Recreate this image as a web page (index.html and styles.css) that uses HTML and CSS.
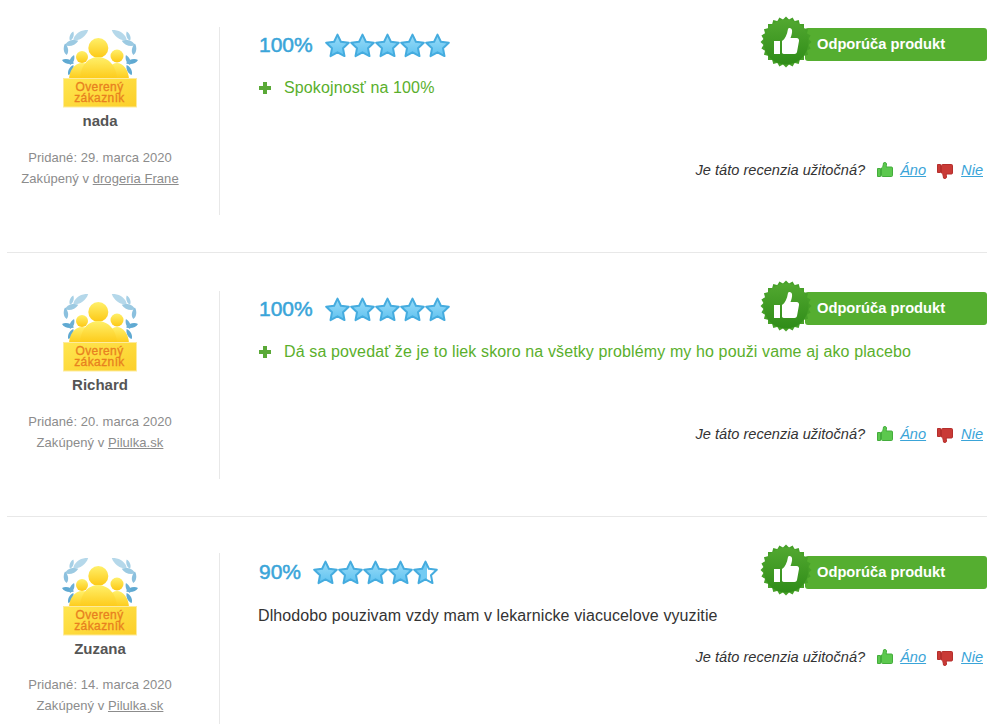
FILE: index.html
```html
<!DOCTYPE html>
<html lang="sk">
<head>
  <meta charset="UTF-8">
  <meta name="viewport" content="width=device-width, initial-scale=1.0">
  <title>Recenzie</title>
  <link rel="stylesheet" href="styles.css">
</head>
<body>
  <svg class="defs" width="0" height="0">
    <defs>
      <linearGradient id="star-fill" x1="0" y1="0" x2="0" y2="1">
        <stop offset="0" stop-color="#9adcf8"/>
        <stop offset="1" stop-color="#5fc2f0"/>
      </linearGradient>
      <linearGradient id="star-half" x1="0" y1="0" x2="1" y2="0">
        <stop offset="0.55" stop-color="#74cbf3"/>
        <stop offset="0.55" stop-color="#ffffff"/>
      </linearGradient>
      <linearGradient id="seal-fill" x1="0" y1="0" x2="0" y2="1">
        <stop offset="0" stop-color="#52a830"/>
        <stop offset="1" stop-color="#2f8c18"/>
      </linearGradient>
      <linearGradient id="gold" x1="0" y1="0" x2="0" y2="1">
        <stop offset="0" stop-color="#fff06a"/>
        <stop offset="1" stop-color="#fdc814"/>
      </linearGradient>
      <linearGradient id="plate" x1="0" y1="0" x2="1" y2="1">
        <stop offset="0" stop-color="#ffe650"/>
        <stop offset="1" stop-color="#fccf2a"/>
      </linearGradient>
      <path id="star-shape" d="M12.5 1.600L15.900 8.800L23.800 9.800L18 15.300L19.500 23.100L12.500 19.300L5.500 23.100L7 15.300L1.200 9.800L9.100 8.800Z"/>
      <path id="leaf" d="M0 0C3-3.200 9-3.200 13 0C9 3.200 3 3.200 0 0Z"/>
      <symbol id="star" viewBox="0 0 25 25">
        <use href="#star-shape" fill="url(#star-fill)" stroke="#45acdf" stroke-width="2" stroke-linejoin="round"/>
      </symbol>
      <symbol id="star-half-icon" viewBox="0 0 25 25">
        <use href="#star-shape" fill="url(#star-half)" stroke="#45acdf" stroke-width="2" stroke-linejoin="round"/>
      </symbol>
      <symbol id="seal" viewBox="0 0 52 52">
        <g fill="#46a028">
          <rect x="8" y="8" width="36" height="36"/>
          <rect x="8" y="8" width="36" height="36" transform="rotate(15 26 26)"/>
          <rect x="8" y="8" width="36" height="36" transform="rotate(30 26 26)"/>
          <rect x="8" y="8" width="36" height="36" transform="rotate(45 26 26)"/>
          <rect x="8" y="8" width="36" height="36" transform="rotate(60 26 26)"/>
          <rect x="8" y="8" width="36" height="36" transform="rotate(75 26 26)"/>
        </g>
        <circle cx="26" cy="26" r="22.500" fill="url(#seal-fill)"/>
        <path fill="#fff" d="M14 25h6v13h-6zM22 25c3-2 5-6 6-12 .3-1.700 3.600-1.500 4 1 .4 2.500-.5 5.500-1.500 8h6c2 0 2.800 1.500 2.500 3l-2 11c-.3 1.300-1.200 2-2.500 2H25c-1.500 0-3-.5-3-1.500z"/>
      </symbol>
      <symbol id="thumb" viewBox="0 0 16 16">
        <path d="M.5 6.500h3v8h-3zM4.500 6c1.200-.5 1.700-2 2-5 .1-.8 3-.8 3 .8 0 1.200-.1 2.200-.3 3.200h5.300c.6 0 1 .4 1 1v7.500c0 .6-.4 1-1 1H5.500c-.6 0-1-.4-1-1z"/>
      </symbol>
      <symbol id="verified" viewBox="0 0 76 78">
        <g id="laurel">
          <use href="#leaf" fill="#b5d8ea" transform="translate(11.300 10) rotate(-34) scale(1.380)"/>
          <use href="#leaf" fill="#a6d0e6" transform="translate(8 10.700) rotate(-70) scale(.75)"/>
          <use href="#leaf" fill="#9ccae2" transform="translate(3 15) rotate(-18) scale(1.080)"/>
          <use href="#leaf" fill="#8bc0de" transform="translate(4.700 25) rotate(-98) scale(.9)"/>
          <use href="#leaf" fill="#5fa9d2" transform="translate(0 30) rotate(15) scale(.96)"/>
          <use href="#leaf" fill="#6cb0d6" transform="translate(8 35) rotate(-68) scale(.83)"/>
          <use href="#leaf" fill="#5fa9d2" transform="translate(6.300 45) rotate(-63) scale(.86)"/>
        </g>
        <use href="#laurel" transform="translate(76 0) scale(-1 1)"/>
        <g fill="url(#gold)">
          <circle cx="20" cy="27" r="6"/>
          <circle cx="55" cy="26" r="6.500"/>
          <path d="M7 50c0-10 6-17 13-17s12 7 12 17z"/>
          <path d="M44 50c0-10 5-17 11-17s12 7 12 17z"/>
          <circle cx="36.300" cy="18" r="10"/>
          <path d="M18 50c0-14 8-23 18-23s19 9 19 23z"/>
        </g>
        <rect x="1.500" y="48.500" width="73" height="28.500" fill="url(#plate)" stroke="#fdeb9c"/>
        <text class="plate-text" x="37.500" y="60.500">Overený</text>
        <text class="plate-text" x="37.500" y="71.500">zákazník</text>
      </symbol>
    </defs>
  </svg>

  <div class="reviews">
    <article class="review">
      <div class="user">
        <svg class="user-badge" width="76" height="78"><use href="#verified"/></svg>
        <div class="user-name">nada</div>
        <p class="user-meta">Pridané: 29. marca 2020<br>Zakúpený v <a href="#">drogeria Frane</a></p>
      </div>
      <div class="main">
        <div class="head">
          <div class="score">
            <span class="percent">100%</span>
            <span class="stars">
              <svg width="25" height="25"><use href="#star"/></svg>
              <svg width="25" height="25"><use href="#star"/></svg>
              <svg width="25" height="25"><use href="#star"/></svg>
              <svg width="25" height="25"><use href="#star"/></svg>
              <svg width="25" height="25"><use href="#star"/></svg>
            </span>
          </div>
          <div class="recommend">
            <svg class="seal" width="52" height="52"><use href="#seal"/></svg>
            <div class="recommend-bar">Odporúča produkt</div>
          </div>
        </div>
        <div class="pro"><span class="plus"></span>Spokojnosť na 100%</div>
        <div class="vote">
          <span class="vote-label">Je táto recenzia užitočná?</span>
          <svg class="thumb-up" width="16" height="16"><use href="#thumb"/></svg>
          <a href="#">Áno</a>
          <svg class="thumb-down" width="16" height="16"><use href="#thumb"/></svg>
          <a href="#">Nie</a>
        </div>
      </div>
    </article>

    <article class="review">
      <div class="user">
        <svg class="user-badge" width="76" height="78"><use href="#verified"/></svg>
        <div class="user-name">Richard</div>
        <p class="user-meta">Pridané: 20. marca 2020<br>Zakúpený v <a href="#">Pilulka.sk</a></p>
      </div>
      <div class="main">
        <div class="head">
          <div class="score">
            <span class="percent">100%</span>
            <span class="stars">
              <svg width="25" height="25"><use href="#star"/></svg>
              <svg width="25" height="25"><use href="#star"/></svg>
              <svg width="25" height="25"><use href="#star"/></svg>
              <svg width="25" height="25"><use href="#star"/></svg>
              <svg width="25" height="25"><use href="#star"/></svg>
            </span>
          </div>
          <div class="recommend">
            <svg class="seal" width="52" height="52"><use href="#seal"/></svg>
            <div class="recommend-bar">Odporúča produkt</div>
          </div>
        </div>
        <div class="pro"><span class="plus"></span>Dá sa povedať že je to liek skoro na všetky problémy my ho použi vame aj ako placebo</div>
        <div class="vote">
          <span class="vote-label">Je táto recenzia užitočná?</span>
          <svg class="thumb-up" width="16" height="16"><use href="#thumb"/></svg>
          <a href="#">Áno</a>
          <svg class="thumb-down" width="16" height="16"><use href="#thumb"/></svg>
          <a href="#">Nie</a>
        </div>
      </div>
    </article>

    <article class="review">
      <div class="user">
        <svg class="user-badge" width="76" height="78"><use href="#verified"/></svg>
        <div class="user-name">Zuzana</div>
        <p class="user-meta">Pridané: 14. marca 2020<br>Zakúpený v <a href="#">Pilulka.sk</a></p>
      </div>
      <div class="main">
        <div class="head">
          <div class="score">
            <span class="percent">90%</span>
            <span class="stars">
              <svg width="25" height="25"><use href="#star"/></svg>
              <svg width="25" height="25"><use href="#star"/></svg>
              <svg width="25" height="25"><use href="#star"/></svg>
              <svg width="25" height="25"><use href="#star"/></svg>
              <svg width="25" height="25"><use href="#star-half-icon"/></svg>
            </span>
          </div>
          <div class="recommend">
            <svg class="seal" width="52" height="52"><use href="#seal"/></svg>
            <div class="recommend-bar">Odporúča produkt</div>
          </div>
        </div>
        <div class="comment">Dlhodobo pouzivam vzdy mam v lekarnicke viacucelove vyuzitie</div>
        <div class="vote">
          <span class="vote-label">Je táto recenzia užitočná?</span>
          <svg class="thumb-up" width="16" height="16"><use href="#thumb"/></svg>
          <a href="#">Áno</a>
          <svg class="thumb-down" width="16" height="16"><use href="#thumb"/></svg>
          <a href="#">Nie</a>
        </div>
      </div>
    </article>
  </div>
</body>
</html>
```
FILE: styles.css
```css
html, body {
  height: 100%;
  overflow: hidden;
}
body {
  margin: 0;
  background-color: white;
  font-family: "Liberation Sans", Arial, sans-serif;
  color: #333;
}
.defs {
  display: block;
  height: 0;
}
.reviews {
  width: 980px;
  margin-left: 7px;
}
.review {
  display: flex;
  padding: 38px 0 37px;
  border-bottom: 1px solid #e8e8e8;
}
.review:first-child {
  padding-top: 27px;
}
.review:last-child {
  padding-top: 36px;
  border-bottom: none;
}
.review:last-child .user {
  padding-top: 5px;
}
.review:last-child .user-meta {
  margin-top: 16px;
}
.review:last-child .main {
  padding-top: 1px;
}
.review:last-child .recommend {
  margin-top: 1px;
}
.user {
  box-sizing: border-box;
  width: 213px;
  min-height: 188px;
  padding: 3px 26px 0 0;
  border-right: 1px solid #e8e8e8;
  text-align: center;
}
.user-badge {
  display: block;
  margin: 0 auto;
}
.plate-text {
  font-family: "Liberation Sans", Arial, sans-serif;
  font-size: 12px;
  fill: #e8801f;
  stroke: #e8801f;
  stroke-width: 0.3px;
  text-anchor: middle;
  letter-spacing: 0.4px;
}
.user-name {
  margin-top: 4px;
  font-size: 15px;
  font-weight: bold;
  line-height: 18px;
  color: #555;
}
.user-meta {
  margin: 17px 0 0;
  font-size: 13px;
  line-height: 21px;
  letter-spacing: 0.05px;
  color: #8c8c8c;
}
.user-meta a {
  color: #8c8c8c;
}
.main {
  flex: 1;
  padding-left: 39px;
}
.head {
  display: flex;
  justify-content: space-between;
  height: 36px;
}
.score {
  display: flex;
  align-items: center;
  gap: 12px;
}
.percent {
  font-size: 21px;
  color: #3aa5d9;
  -webkit-text-stroke: 0.5px #3aa5d9;
}
.stars {
  display: flex;
}
.recommend {
  position: relative;
  width: 226px;
}
.seal {
  position: absolute;
  left: -1px;
  top: -11px;
}
.recommend-bar {
  box-sizing: border-box;
  height: 33px;
  margin: 1px 0 0 44px;
  padding-left: 12px;
  border-radius: 3px;
  background-color: #55ae30;
  color: white;
  font-size: 14.7px;
  font-weight: bold;
  line-height: 32px;
}
.pro {
  display: flex;
  align-items: center;
  margin: 16px 0 64px;
  font-size: 16px;
  line-height: 18px;
  letter-spacing: 0.12px;
  color: #5aaf2c;
}
.plus {
  position: relative;
  width: 12px;
  height: 4px;
  margin-right: 13px;
  background-color: #5aa937;
}
.plus::after {
  content: "";
  position: absolute;
  left: 4px;
  top: -4px;
  width: 4px;
  height: 12px;
  background-color: #5aa937;
}
.comment {
  margin: 17px 0 23px -1px;
  font-size: 16px;
  line-height: 18px;
  letter-spacing: 0.1px;
  color: #333;
}
.vote {
  display: flex;
  justify-content: flex-end;
  align-items: center;
  padding-right: 4px;
  font-size: 14.6px;
  font-style: italic;
  line-height: 18px;
}
.vote a {
  color: #3aa4d8;
}
.thumb-up {
  margin: 0 7px 0 12px;
  fill: #5cc84e;
  stroke: #44ad3c;
}
.thumb-down {
  margin: 2px 8px 0 11px;
  fill: #c93a36;
  stroke: #b52f2c;
  transform: scaleY(-1);
}
```
